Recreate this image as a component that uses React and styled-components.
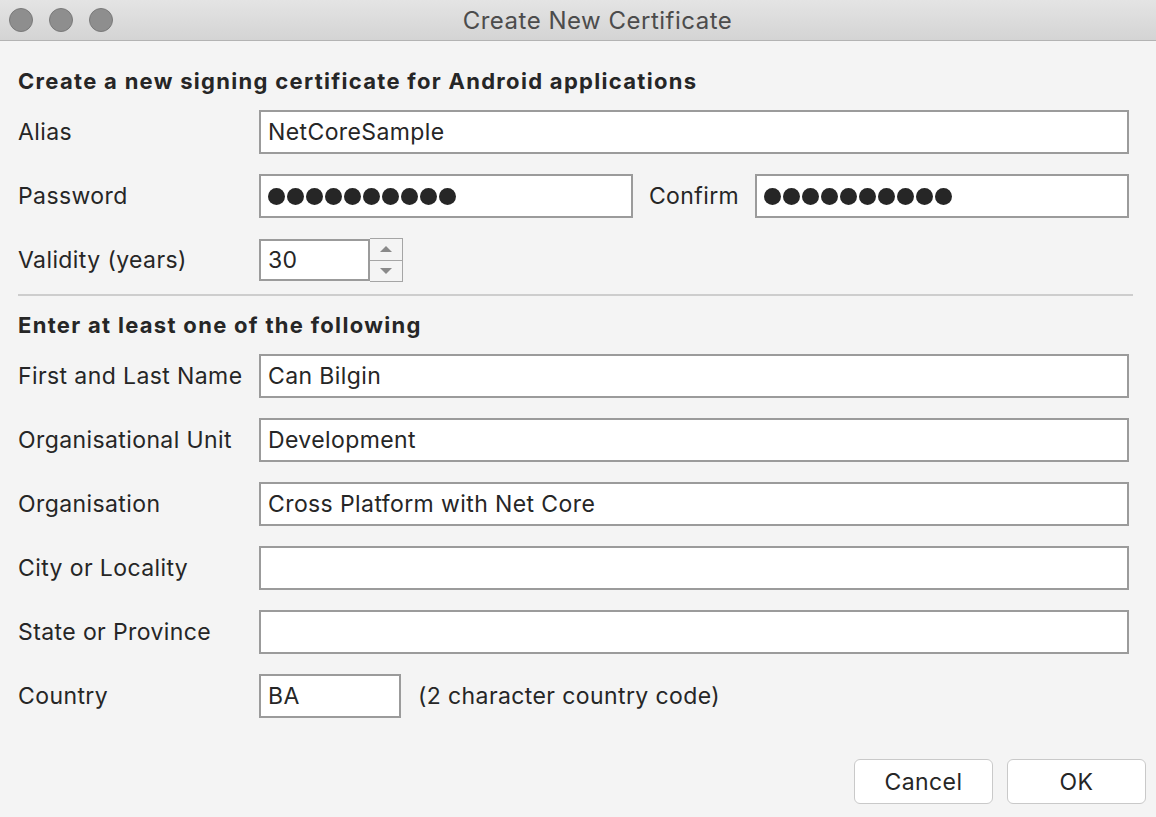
import React from 'react';
import styled, { createGlobalStyle } from 'styled-components';

const Global = createGlobalStyle`
  html, body { margin: 0; padding: 0; background: #f4f4f4; }
  body { font-family: Inter, "Noto Sans", sans-serif; color: #262626; }
`;

const Window = styled.div`
  width: 1156px;
  height: 817px;
  background: #f4f4f4;
  display: flex;
  flex-direction: column;
`;

const TitleBar = styled.div`
  height: 40px;
  display: flex;
  align-items: center;
  background: linear-gradient(#e4e4e4, #d4d4d4);
  border-bottom: 1px solid #b3b3b3;
`;

const Lights = styled.div`
  display: flex;
  gap: 16px;
  padding-left: 9px;
`;

const Light = styled.span`
  width: 22px;
  height: 22px;
  border-radius: 50%;
  background: #8e8e8e;
  border: 1px solid #7a7a7a;
`;

const Title = styled.div`
  flex: 1;
  text-align: center;
  font-size: 24px;
  letter-spacing: 0.5px;
  color: #4c4c4c;
  margin-right: 74px;
`;

const Body = styled.div`
  flex: 1;
  display: flex;
  flex-direction: column;
  padding: 27px 27px 0 18px;
`;

const Heading = styled.div`
  font-size: 22px;
  font-weight: 700;
  letter-spacing: 1.3px;
  line-height: 26px;
  margin: 0 0 16px;
`;

const Form = styled.div`
  display: grid;
  grid-template-columns: 241px 1fr;
  row-gap: 20px;
  align-items: center;
`;

const Label = styled.div`
  font-size: 23px;
  letter-spacing: 0.4px;
  line-height: 26px;
`;

const Line = styled.div`
  display: flex;
  align-items: center;
  justify-content: ${p => p.$spread ? 'space-between' : 'flex-start'};
  gap: ${p => p.$gap || 0}px;
`;

const Field = styled.div`
  box-sizing: border-box;
  height: ${p => p.$h || 44}px;
  width: ${p => (p.$w ? p.$w + 'px' : '100%')};
  flex: ${p => (p.$w ? 'none' : 1)};
  background: #fff;
  border: 2px solid #9b9b9b;
  display: flex;
  align-items: center;
  padding: 0 7px;
  font-size: 23px;
  letter-spacing: 0.4px;
  white-space: nowrap;
  overflow: hidden;
`;

const Dots = styled.div`
  display: flex;
  gap: 2px;
`;

const Dot = styled.span`
  width: 17px;
  height: 17px;
  border-radius: 50%;
  background: #262626;
`;

const Spinner = styled.div`
  box-sizing: border-box;
  width: 33px;
  height: 44px;
  border: 1px solid #a5a5a5;
  border-left: none;
  display: flex;
  flex-direction: column;
`;

const SpinHalf = styled.div`
  flex: 1;
  display: flex;
  align-items: center;
  justify-content: center;
  & + & { border-top: 1px solid #a5a5a5; }
`;

const Arrow = styled.span`
  width: 0;
  height: 0;
  border-left: 6px solid transparent;
  border-right: 6px solid transparent;
  ${p => (p.$up ? 'border-bottom: 6px solid #8a8a8a;' : 'border-top: 6px solid #8a8a8a;')}
`;

const Separator = styled.div`
  height: 2px;
  background: #cdcdcd;
  margin: 12px -4px 16px 0;
`;

const Hint = styled.span`
  font-size: 23px;
  letter-spacing: 0.4px;
`;

const Buttons = styled.div`
  display: flex;
  justify-content: flex-end;
  gap: 14px;
  margin: 41px -17px 0 0;
`;

const Button = styled.button`
  box-sizing: border-box;
  width: 139px;
  height: 45px;
  background: #fff;
  border: 1px solid #c9c9c9;
  border-radius: 6px;
  font-family: inherit;
  font-size: 23px;
  letter-spacing: 0.4px;
  color: #262626;
`;

const Password = () => (
  <Dots>
    {Array.from({ length: 10 }).map((_, i) => <Dot key={i} />)}
  </Dots>
);

const nameRows = [
  ['First and Last Name', 'Can Bilgin'],
  ['Organisational Unit', 'Development'],
  ['Organisation', 'Cross Platform with Net Core'],
  ['City or Locality', ''],
  ['State or Province', ''],
];

export default function App() {
  return (
    <Window>
      <Global />
      <TitleBar>
        <Lights>
          <Light />
          <Light />
          <Light />
        </Lights>
        <Title>Create New Certificate</Title>
      </TitleBar>
      <Body>
        <Heading>Create a new signing certificate for Android applications</Heading>
        <Form>
          <Label>Alias</Label>
          <Field>NetCoreSample</Field>

          <Label>Password</Label>
          <Line $spread>
            <Field $w={374}><Password /></Field>
            <Label>Confirm</Label>
            <Field $w={374}><Password /></Field>
          </Line>

          <Label>Validity (years)</Label>
          <Line>
            <Field $w={111} $h={42}>30</Field>
            <Spinner>
              <SpinHalf><Arrow $up /></SpinHalf>
              <SpinHalf><Arrow /></SpinHalf>
            </Spinner>
          </Line>
        </Form>

        <Separator />

        <Heading>Enter at least one of the following</Heading>
        <Form>
          {nameRows.map(([label, value]) => (
            <React.Fragment key={label}>
              <Label>{label}</Label>
              <Field>{value}</Field>
            </React.Fragment>
          ))}
          <Label>Country</Label>
          <Line $gap={17}>
            <Field $w={142}>BA</Field>
            <Hint>(2 character country code)</Hint>
          </Line>
        </Form>

        <Buttons>
          <Button>Cancel</Button>
          <Button>OK</Button>
        </Buttons>
      </Body>
    </Window>
  );
}
